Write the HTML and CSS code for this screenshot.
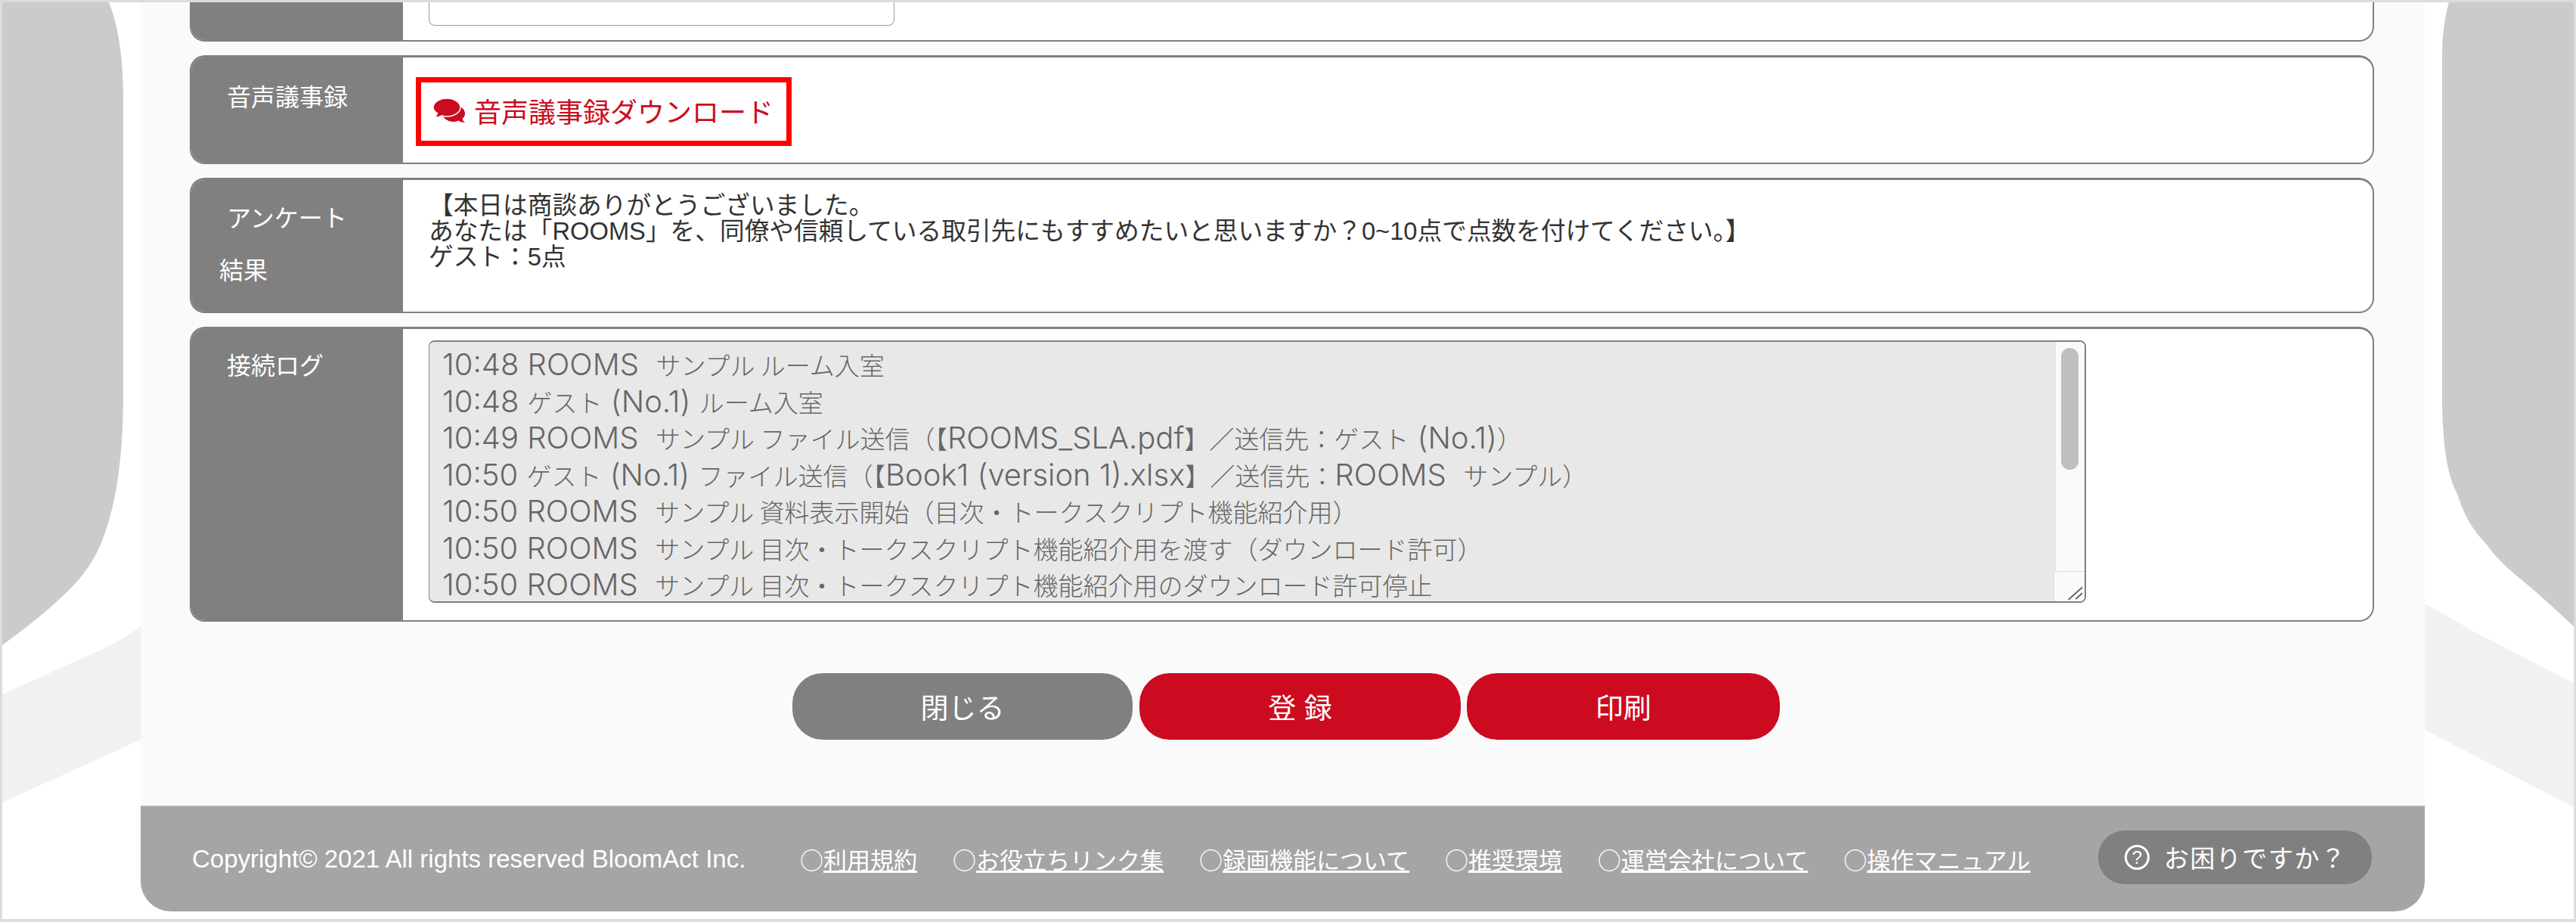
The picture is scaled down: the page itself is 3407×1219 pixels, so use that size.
FILE: index.html
```html
<!DOCTYPE html>
<html lang="ja">
<head>
  <meta charset="UTF-8">
  <title>ROOMS</title>
  <link rel="stylesheet" href="styles.css">
</head>
<body>

  <div class="frame">

    <!-- Background shapes -->
    <svg class="backdrop" viewBox="3 3 3401 1212">
      <path class="shape" d="M3 3H144C155 30 163 70 163 130V520C163 620 150 680 133 720C120 750 104 768 84 787C60 810 32 832 3 853Z"/>
      <path class="shape" d="M3404 3H3239C3233 25 3230 45 3230 80V540C3232 600 3238 630 3250 653C3262 690 3275 705 3289 720C3310 750 3335 765 3359 787L3404 828Z"/>
      <path class="band" d="M3 918L147 853Q170 840 186 828V978L3 1061Z"/>
      <path class="band" d="M3207 798L3281 840L3404 903V1067L3207 965Z"/>
    </svg>

    <div class="panel">

      <div class="rows">
        <!-- Row cut off by the top of the window -->
        <div class="row row-cut">
          <div class="row-label"></div>
          <div class="row-body body-log">
            <div class="memo-box"></div>
          </div>
        </div>

        <div class="row row-minutes">
          <div class="row-label">音声議事録</div>
          <div class="row-body body-minutes">
            <a class="download" href="#">
              <svg class="chat-icon" viewBox="0 0 42 32">
                <path class="chat-back" d="M27 9C35 9 42 13.500 42 20C42 23 40.500 25.500 38.500 27C39 29 40.500 31 42 32C38 32 35 30.500 33 29.500C31 30.500 29 31 27 31C19 31 12 26 12 20C12 14 19 9 27 9Z"/>
                <path class="chat-front" d="M18 0C28 0 36 5.500 36 12C36 18.500 28 24 18 24C15.500 24 13.500 23.700 11.500 23C9 24.500 5 25.500 1 25.500C3 24 5 21.500 5.500 19.800C2 17.800 0 15 0 12C0 5.500 8 0 18 0Z"/>
              </svg>
              <span>音声議事録ダウンロード</span>
            </a>
          </div>
        </div>

        <div class="row row-survey">
          <div class="row-label label-survey">アンケート<br>結果</div>
          <div class="row-body body-survey">【本日は商談ありがとうございました。<br>あなたは「ROOMS」を、同僚や信頼している取引先にもすすめたいと思いますか？0~10点で点数を付けてください。】<br>ゲスト：5点</div>
        </div>

        <div class="row row-log">
          <div class="row-label label-log">接続ログ</div>
          <div class="row-body body-log">
            <div class="log-box">
              <div class="log-lines">
                <div class="log-line"><span class="en">10:48 ROOMS  </span>サンプル ルーム入室</div>
                <div class="log-line"><span class="en">10:48 </span>ゲスト<span class="en"> (No.1) </span>ルーム入室</div>
                <div class="log-line"><span class="en">10:49 ROOMS  </span>サンプル ファイル送信（【<span class="en">ROOMS_SLA.pdf</span>】／送信先：ゲスト<span class="en"> (No.1)</span>）</div>
                <div class="log-line"><span class="en">10:50 </span>ゲスト<span class="en"> (No.1) </span>ファイル送信（【<span class="en">Book1 (version 1).xlsx</span>】／送信先：<span class="en">ROOMS  </span>サンプル）</div>
                <div class="log-line"><span class="en">10:50 ROOMS  </span>サンプル 資料表示開始（目次・トークスクリプト機能紹介用）</div>
                <div class="log-line"><span class="en">10:50 ROOMS  </span>サンプル 目次・トークスクリプト機能紹介用を渡す（ダウンロード許可）</div>
                <div class="log-line"><span class="en">10:50 ROOMS  </span>サンプル 目次・トークスクリプト機能紹介用のダウンロード許可停止</div>
              </div>
              <div class="scrollbar">
                <div class="scroll-track">
                  <div class="scroll-thumb"></div>
                </div>
                <svg class="resizer" viewBox="0 0 41 40">
                  <path d="M38 21L19 38M38 29L29 37"/>
                </svg>
              </div>
            </div>
          </div>
        </div>
      </div>

      <div class="actions">
        <button class="btn btn-close">閉じる</button>
        <button class="btn btn-save">登 録</button>
        <button class="btn btn-print">印刷</button>
      </div>

      <footer class="footer">
        <div class="copyright">Copyright© 2021 All rights reserved BloomAct Inc.</div>
        <nav class="footer-links">
          <span>○<a href="#">利用規約</a></span>
          <span>○<a href="#">お役立ちリンク集</a></span>
          <span>○<a href="#">録画機能について</a></span>
          <span>○<a href="#">推奨環境</a></span>
          <span>○<a href="#">運営会社について</a></span>
          <span>○<a href="#">操作マニュアル</a></span>
        </nav>
        <div class="help">
          <span class="help-mark">?</span>
          <span>お困りですか？</span>
        </div>
      </footer>

    </div>
  </div>

</body>
</html>
```

FILE: styles.css
```css
/* Global Styles */
* {
  box-sizing: border-box;
}

body {
  margin: 0;
  background: #fff;
  font-family: "Liberation Sans", "Noto Sans CJK JP", sans-serif;
  overflow: hidden;
}

.frame {
  position: relative;
  height: 1219px;
  border: 3px solid #dcdcdc;
  border-bottom-width: 4px;
  overflow: hidden;
}

.backdrop {
  position: absolute;
  top: 0;
  left: 0;
  width: 3401px;
  height: 1212px;
}

.shape {
  fill: #cbcbcb;
}

.band {
  fill: #f1f1f1;
}

/* Main panel */
.panel {
  position: relative;
  display: flex;
  flex-direction: column;
  width: 3021px;
  height: 1202px;
  margin-left: 183px;
  background: #fafafa;
  border-radius: 0 0 40px 40px;
}

.rows {
  display: flex;
  flex-direction: column;
  gap: 18px;
  padding: 0 67px 0 65px;
}

.row {
  display: flex;
  background: #fff;
  border: 2px solid #808080;
  border-top-width: 3px;
  border-radius: 20px;
  overflow: hidden;
}

.row-cut {
  height: 52px;
  border-top: none;
  border-radius: 0 0 20px 20px;
}

.row-minutes {
  height: 144px;
}

.row-survey {
  height: 179px;
}

.row-log {
  height: 390px;
}

.row-label {
  flex: 0 0 280px;
  padding: 30px 0 0 47px;
  background: #808080;
  color: #fff;
  font-size: 32px;
  line-height: 46px;
}

.label-survey {
  padding: 17px 0 0 37px;
  line-height: 69px;
  text-indent: 10px;
}

.label-log {
  padding-top: 26px;
}

.row-body {
  flex: 1;
}

/* Download link */
.body-minutes {
  padding: 26px 0 0 17px;
}

.download {
  display: flex;
  align-items: center;
  width: 497px;
  height: 91px;
  padding: 0 0 3px 16px;
  border: 7px solid #f00;
  color: #cc0b20;
  font-size: 36px;
  text-decoration: none;
}

.chat-icon {
  width: 42px;
  height: 32px;
  margin-right: 12px;
}

.chat-back {
  fill: #cc0b20;
}

.chat-front {
  fill: #cc0b20;
  stroke: #fff;
  stroke-width: 1.500;
}

/* Survey */
.body-survey {
  padding: 17px 0 0 34px;
  color: #333;
  font-size: 32.700px;
  line-height: 34px;
}

/* Log */
.body-log {
  padding: 15px 0 0 34px;
}

.row-cut .body-log {
  padding-top: 0;
}

.memo-box {
  width: 616px;
  height: 31px;
  border: 1px solid #999;
  border-top: none;
  border-radius: 0 0 8px 8px;
}

.log-box {
  display: flex;
  width: 2192px;
  height: 347px;
  border: 1px solid #808080;
  border-width: 2px 2px 2px 1px;
  border-radius: 8px;
  overflow: hidden;
}

.log-lines {
  flex: 1;
  padding: 6px 0 0 17px;
  background: #e8e8e8;
  color: #666;
  font-family: "Noto Sans CJK JP", sans-serif;
  font-size: 33px;
  font-weight: 300;
  overflow: hidden;
}

.log-line {
  height: 48.500px;
  line-height: 48.500px;
  white-space: pre;
}

.en {
  font-family: Inter, sans-serif;
  font-size: 40px;
}

.scrollbar {
  display: flex;
  flex-direction: column;
  flex: 0 0 38px;
  background: #fafafa;
}

.scroll-track {
  flex: 1;
  padding: 8px 8px 0 7px;
}

.scroll-thumb {
  height: 161px;
  background: #bfbfbf;
  border-radius: 12px;
}

.resizer {
  display: block;
  width: 41px;
  height: 40px;
  margin-left: -3px;
  background: #fafafa;
  border-top: 1px solid #ddd;
  border-left: 1px solid #ddd;
  fill: none;
  stroke: #666;
  stroke-width: 2;
}

/* Buttons */
.actions {
  display: flex;
  gap: 8px;
  margin: 68px 0 0 862px;
}

.btn {
  height: 88px;
  padding: 0;
  border: none;
  border-radius: 40px;
  color: #fff;
  font-family: inherit;
  font-size: 37px;
}

.btn-close {
  width: 450px;
  margin-right: 1px;
  background: #808080;
}

.btn-save {
  width: 425px;
  background: #cc0b20;
}

.btn-print {
  width: 414px;
  background: #cc0b20;
}

/* Footer */
.footer {
  display: flex;
  align-items: center;
  height: 140px;
  margin-top: auto;
  padding-left: 68px;
  background: #a5a5a5;
  border-top: 1px solid #c8c8c8;
  border-radius: 0 0 40px 40px;
  color: #fff;
  font-size: 31px;
}

.copyright {
  width: 804px;
  font-size: 33px;
}

.footer-links {
  display: flex;
  gap: 47px;
  font-family: "Noto Sans CJK JP", sans-serif;
}

.footer-links a {
  color: #fff;
}

.help {
  display: flex;
  align-items: center;
  width: 362px;
  height: 71px;
  margin: -5px 70px 0 auto;
  padding-left: 35px;
  background: #808080;
  border-radius: 35px;
  font-size: 33px;
  letter-spacing: 1.500px;
}

.help-mark {
  width: 33px;
  height: 33px;
  margin-right: 19px;
  border: 3px solid #fff;
  border-radius: 50%;
  font-size: 24px;
  line-height: 27px;
  letter-spacing: 0;
  text-align: center;
}
```
